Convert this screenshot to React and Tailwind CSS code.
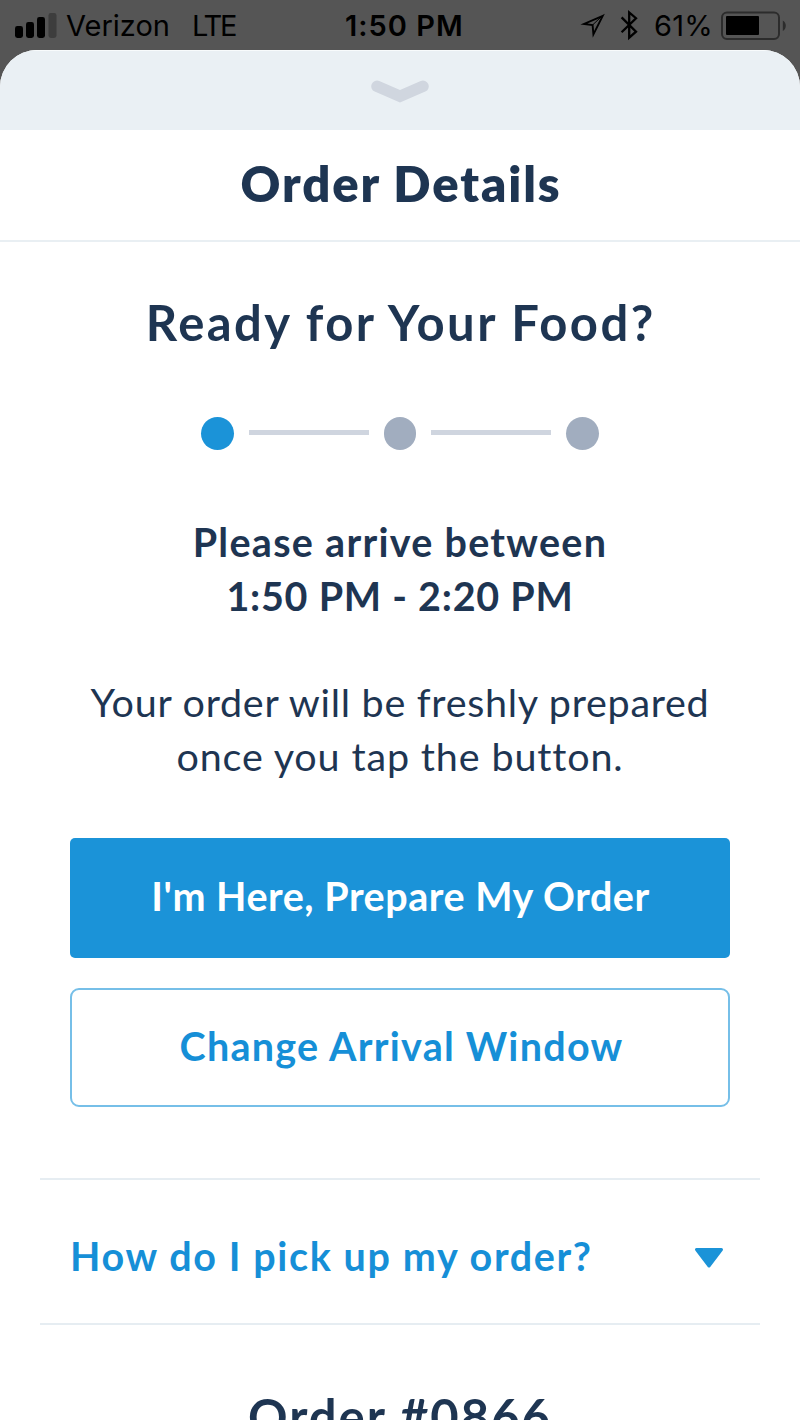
function StatusBar() {
  return (
    <div className="flex h-[52px] shrink-0 items-start bg-[#555555] font-['Inter',sans-serif] text-[29px] leading-[52px] text-black">
      <svg width="42" height="25" viewBox="0 0 42 25" className="ml-[15px] mt-[13px] shrink-0">
        <rect x="0" y="13" width="8" height="12" rx="2.4" />
        <rect x="11" y="9" width="8" height="16" rx="2.4" />
        <rect x="22" y="4" width="8" height="21" rx="2.4" />
        <rect x="33.5" y="0" width="8" height="25" rx="2.4" fill="#3d3d3d" />
      </svg>
      <span className="ml-[9px] w-[126px]">Verizon</span>
      <span className="w-[153px] tracking-[-2.2px]">LTE</span>
      <span className="w-[236px] font-semibold tracking-[1px]">1:50 PM</span>
      <svg width="26" height="28" viewBox="0 0 26 28" className="-ml-0.5 mt-3 shrink-0" fill="none" stroke="#000" strokeWidth="1.9" strokeLinejoin="miter">
        <path d="M23.8 3.8 L5 12 L13.6 13 L14.4 22.4 Z" />
        <path d="M14 12.6 L22 5" strokeWidth="1" />
      </svg>
      <svg width="20" height="32" viewBox="0 0 20 32" className="ml-[15px] mt-[9px] shrink-0" fill="none" stroke="#000" strokeWidth="2.3">
        <path d="M1.6 8.4 L16 22.6 L9.2 28.6 V3.4 L16 9.2 L1.6 23.2" />
      </svg>
      <span className="ml-3.5 w-[66px] whitespace-nowrap tracking-[0.2px]">61%</span>
      <svg width="68" height="30" viewBox="0 0 68 30" className="-ml-[0.5px] mt-[11px] shrink-0">
        <rect x="2" y="1.5" width="57" height="26.5" rx="5" fill="none" stroke="#2c2c2c" strokeWidth="2" />
        <rect x="6" y="5" width="33" height="19" rx="1" />
        <path d="M62.8 9.5 C66.8 12 66.8 17.5 62.8 20 Z" fill="#2c2c2c" />
      </svg>
    </div>
  );
}

function Steps() {
  return (
    <div className="mt-[65px] flex h-[33px] items-center justify-center">
      <span className="size-[32.5px] rounded-full bg-[#1b93d8]" />
      <span className="mx-[15px] mb-0.5 h-[5px] w-[120px] bg-[#cfd5df]" />
      <span className="size-[32.5px] rounded-full bg-[#a1adbf]" />
      <span className="mx-[15px] mb-0.5 h-[5px] w-[120px] bg-[#cfd5df]" />
      <span className="size-[32.5px] rounded-full bg-[#a1adbf]" />
    </div>
  );
}

export default function App() {
  return (
    <div className="flex h-[1420px] w-[800px] flex-col overflow-hidden bg-[#555555] font-['Lato',sans-serif] text-[39.5px] leading-[54px] text-[#1e3552]">
      <StatusBar />
      <div className="-mt-0.5 flex flex-1 flex-col overflow-hidden rounded-t-[37px] bg-white">
        <div className="flex h-20 shrink-0 justify-center border-t border-[#f8fbfc] bg-[#eaf0f4]">
          <svg width="60" height="26" viewBox="0 0 60 26" className="mt-[27px]" fill="none" stroke="#d0d6df" strokeWidth="11.5" strokeLinecap="round">
            <path d="M7 8.3 L30 18.3 L53 8.3" strokeLinejoin="miter" />
          </svg>
        </div>
        <header className="h-28 shrink-0 border-b-2 border-[#e9eff3] pt-[23px]">
          <h1 className="pl-0.5 text-center text-[49px] leading-[60px] font-extrabold tracking-[1.9px]">Order Details</h1>
        </header>
        <main className="flex flex-col pt-[50px]">
          <h2 className="pl-[1.5px] text-center text-[49px] leading-[60px] font-bold tracking-[2.45px]">Ready for Your Food?</h2>
          <Steps />
          <div className="mt-[65px] text-center font-bold">
            <p className="tracking-[1.28px]">Please arrive between</p>
            <p className="tracking-[0.75px]">1:50 PM - 2:20 PM</p>
          </div>
          <div className="mt-[52px] text-center">
            <p className="tracking-[0.72px]">Your order will be freshly prepared</p>
            <p className="tracking-[0.85px]">once you tap the button.</p>
          </div>
          <div className="mx-[70px] mt-[55px] flex flex-col gap-[30px]">
            <button className="h-[119.5px] rounded-[5px] bg-[#1b93d8] pb-1 pl-px font-bold tracking-[0.52px] text-white">I'm Here, Prepare My Order</button>
            <button className="h-[119.5px] rounded-[9px] border-2 border-[#76bfe8] pb-[3px] pl-[3px] font-bold tracking-[1.28px] text-[#168fd7]">Change Arrival Window</button>
          </div>
          <div className="mx-10 mt-[71px] flex h-[147px] items-center justify-between border-y-2 border-[#e6edf2] pr-9 pl-[30px]">
            <span className="pt-2 font-bold tracking-[1.62px] text-[#168fd7]">How do I pick up my order?</span>
            <svg width="30" height="22" viewBox="0 0 30 22" className="mt-3">
              <path d="M2.5 2.5 H27.5 L15 19 Z" fill="#1b93d8" stroke="#1b93d8" strokeWidth="3" strokeLinejoin="round" />
            </svg>
          </div>
          <h2 className="mt-[61px] text-center text-[49px] leading-[60px] font-bold tracking-[2px]">Order #0866</h2>
        </main>
      </div>
    </div>
  );
}
